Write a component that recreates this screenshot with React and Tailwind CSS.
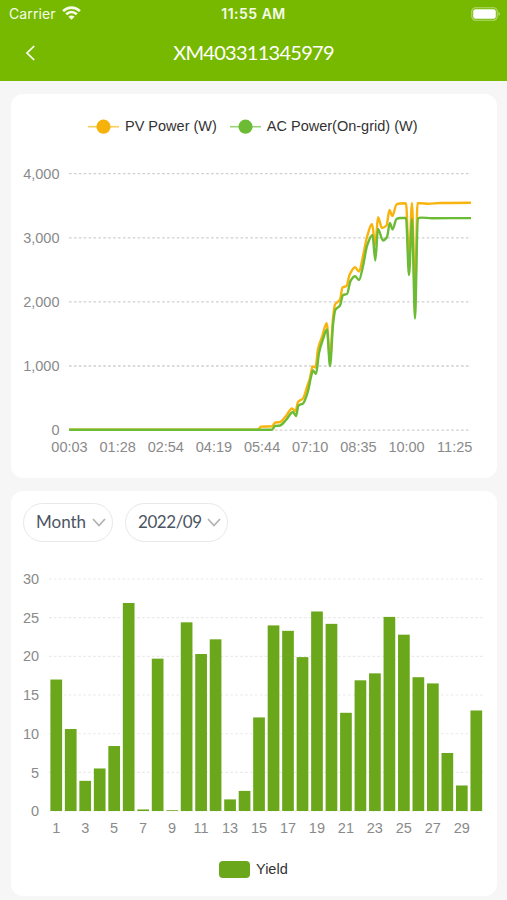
import React from "react";

const PV = [
  [69, 429.7], [258, 429.7], [261, 426.6], [272, 426.4], [275, 422.6], [280, 422], [286, 416], [292, 408.5], [295.5, 411],
  [298, 402], [303, 398.5], [307, 387], [310, 378], [312.5, 366.5], [315.5, 367.5], [318, 349], [322, 337], [326.7, 323.3],
  [330, 360], [333, 318], [335, 304.5], [340, 299.5], [342.5, 287.5], [346.5, 286], [349.5, 275], [355, 267.3], [359, 271.5],
  [363, 256], [367, 237], [372, 224], [375.3, 245], [378, 217.3], [382, 228], [386.5, 225.5], [389.5, 210], [392.3, 216],
  [396.5, 204.5], [400, 203.5], [406, 203.2], [409, 262], [412, 203], [415, 300], [417.5, 203.3], [421, 203.2], [428, 203.8],
  [440, 203], [471, 202.7],
];
const AC = [
  [69, 429.7], [272, 429.7], [275, 426], [280, 425.5], [286, 420], [293, 412], [296, 416], [298.5, 405.5], [303, 403.5],
  [308, 391], [311, 377], [313, 370.5], [316, 374], [319, 353], [323, 339], [327, 329.5], [330, 366], [333, 325], [335.3, 310],
  [340, 305.5], [343, 295], [347, 294], [350.5, 281], [355, 276.3], [359, 280], [363, 266], [367, 246], [372.5, 235],
  [375.3, 260.5], [378, 229], [383, 240.5], [387, 237], [389.8, 223], [392.5, 229.5], [396.5, 219], [400, 218], [406, 218],
  [409, 275], [412, 219], [415, 318.5], [417.8, 218.5], [421, 217.6], [432, 218.2], [471, 218.1],
];

// Cubic path through the points, without overshoot at local extrema.
function smooth(p) {
  const slopes = p.slice(1).map((q, i) => (q[1] - p[i][1]) / (q[0] - p[i][0]));
  const m = p.map((_, i) => {
    if (i === 0 || i === p.length - 1) return 0;
    const a = slopes[i - 1];
    const b = slopes[i];
    return a * b <= 0 ? 0 : (2 * a * b) / (a + b);
  });
  let d = `M${p[0][0]} ${p[0][1]}`;
  for (let i = 1; i < p.length; i++) {
    const h = (p[i][0] - p[i - 1][0]) / 3;
    d += `C${p[i - 1][0] + h} ${p[i - 1][1] + m[i - 1] * h} ${p[i][0] - h} ${p[i][1] - m[i] * h} ${p[i][0]} ${p[i][1]}`;
  }
  return d;
}

const TIMES = ["00:03", "01:28", "02:54", "04:19", "05:44", "07:10", "08:35", "10:00", "11:25"];
const YIELD = [
  17, 10.6, 3.9, 5.5, 8.4, 26.9, 0.2, 19.7, 0.1, 24.4, 20.3, 22.2, 1.5, 2.6, 12.1, 24, 23.3, 19.9, 25.8, 24.2, 12.7,
  16.9, 17.8, 25.1, 22.8, 17.3, 16.5, 7.5, 3.3, 13,
];

function PowerChart() {
  return (
    <svg className="block h-[320px] w-[486px] text-[14.5px]" viewBox="11 150 486 320">
      {["4,000", "3,000", "2,000", "1,000", "0"].map((t, i) => (
        <g key={t}>
          <text x="59.5" y={178.6 + i * 64.1} textAnchor="end" fill="#8a8a8a">{t}</text>
          <line x1="69" x2="471" y1={173.7 + i * 64.1} y2={173.7 + i * 64.1} stroke="#cfcfcf" strokeWidth="1.3" strokeDasharray="2.6 2.3" />
        </g>
      ))}
      {TIMES.map((t, i) => (
        <text key={t} x={69.5 + i * 48.15} y="452" textAnchor="middle" fill="#8a8a8a">{t}</text>
      ))}
      <g fill="none" strokeWidth="2.4" strokeLinejoin="round" strokeLinecap="butt">
        <path d={smooth(PV)} stroke="#f8b30c" />
        <path d={smooth(AC)} stroke="#6cbb35" />
      </g>
    </svg>
  );
}

function YieldChart() {
  return (
    <svg className="block h-[280px] w-[486px] text-[14.5px]" viewBox="11 565 486 280">
      {[30, 25, 20, 15, 10, 5, 0].map((t, i) => (
        <g key={t}>
          <text x="39.2" y={584 + i * 38.7} textAnchor="end" fill="#8a8a8a">{t}</text>
          <line x1="49" x2="483" y1={579 + i * 38.67} y2={579 + i * 38.67} stroke="#e9e9e9" strokeWidth="1.1" strokeDasharray="2.6 2.3" />
        </g>
      ))}
      {YIELD.map((v, i) => (
        <g key={i}>
          <rect x={50.4 + i * 14.485} y={811 - v * 7.733} width="11.7" height={v * 7.733} fill="#6ba71a" />
          {i % 2 === 0 && (
            <text x={56.2 + i * 14.485} y="833" textAnchor="middle" fill="#8a8a8a">{i + 1}</text>
          )}
        </g>
      ))}
    </svg>
  );
}

function Select({ className, children }) {
  return (
    <button className={`flex h-[39px] items-center justify-between rounded-full border border-[#e8e8e8] pb-[2px] pl-3 pr-[6px] font-['Lato',sans-serif] text-[17px] text-[#4b5563] ${className}`}>
      <span className="whitespace-nowrap">{children}</span>
      <svg className="mt-[2px] h-[9px] w-[14px]" viewBox="0 0 14 9" fill="none" stroke="#b2b2b2" strokeWidth="1.7">
        <path d="M1 1l6 6.5L13 1" />
      </svg>
    </button>
  );
}

function LegendItem({ line, dot, children }) {
  return (
    <div className="flex items-center gap-[6px]">
      <svg className="h-[16px] w-[31px]" viewBox="0 0 31 16">
        <path d="M0 7.7h31" stroke={line} strokeWidth="1.6" />
        <circle cx="15.5" cy="7.7" r="7.1" fill={dot} />
      </svg>
      <span className="whitespace-nowrap">{children}</span>
    </div>
  );
}

export default function App() {
  return (
    <div className="flex h-[900px] w-[507px] flex-col overflow-hidden bg-[#f6f6f6] font-['Liberation_Sans',Arial,sans-serif]">
      <header className="h-[81px] shrink-0 bg-[#77b900] text-white">
        <div className="grid h-[27px] grid-cols-[1fr_80px_1fr] items-center pl-[9px] pr-[9px] font-['Inter',sans-serif] text-[#f6fbe9]">
          <div className="flex items-center gap-[6px] text-[14px]">
            <span className="tracking-[0.1px]">Carrier</span>
            <svg className="mb-[1px] h-[14px] w-[19px]" viewBox="0 0 19 14" fill="none" stroke="currentColor" strokeWidth="2.7">
              <path d="M1.1 5.1C6 .4 13 .4 17.9 5.1M4.2 8.3c3.2-2.9 7.4-2.9 10.6 0" />
              <path d="M9.5 13.8L6.4 10.7c1.7-1.6 4.5-1.6 6.2 0z" fill="currentColor" stroke="none" />
            </svg>
          </div>
          <div className="whitespace-nowrap text-center text-[14px] font-semibold tracking-[0.5px]">11:55 AM</div>
          <div className="-mr-[3px] flex justify-end">
            <svg className="h-[14px] w-[30px]" viewBox="0 0 30 14">
              <rect x=".8" y=".8" width="25.4" height="12.4" rx="3.6" fill="none" stroke="#b7d976" strokeWidth="1.1" />
              <rect x="2.2" y="2.3" width="22.6" height="9.4" rx="2.2" fill="#fff" />
              <path d="M27.5 5.1c2 .7 2 3.1 0 3.8z" fill="#b7d976" />
            </svg>
          </div>
        </div>
        <div className="grid h-[52px] grid-cols-[40px_1fr_40px] items-center">
          <svg className="ml-[25px] h-[16px] w-[11px]" viewBox="0 0 11 16" fill="none" stroke="white" strokeWidth="1.7">
            <path d="M9.2 1L2 8l7.2 7" />
          </svg>
          <h1 className="pb-[2px] text-center font-['Lato',sans-serif] text-[20px] tracking-[-0.72px]">XM403311345979</h1>
        </div>
      </header>
      <main className="flex flex-col gap-[13px] pl-[11px] pt-[13px]">
        <section className="h-[384px] w-[486px] rounded-[12px] bg-white">
          <div className="flex h-[56px] items-center gap-[13px] pl-[77px] pt-[9px] text-[14.5px] text-[#333]">
            <LegendItem line="#facc58" dot="#f5b20b">PV Power (W)</LegendItem>
            <LegendItem line="#9bd17a" dot="#6cbb35">AC Power(On-grid) (W)</LegendItem>
          </div>
          <PowerChart />
        </section>
        <section className="h-[405px] w-[486px] rounded-[12px] bg-white">
          <div className="flex h-[74px] gap-[12px] pl-[12px] pt-[12px]">
            <Select className="w-[90px]">Month</Select>
            <Select className="w-[103px] tracking-[-0.45px]">2022/09</Select>
          </div>
          <YieldChart />
          <div className="flex h-[49px] items-center gap-[6px] pl-[208px] text-[14.5px] text-[#333]">
            <div className="h-[17px] w-[31px] rounded-[4px] bg-[#6ba71a]" />
            <span>Yield</span>
          </div>
        </section>
      </main>
    </div>
  );
}
